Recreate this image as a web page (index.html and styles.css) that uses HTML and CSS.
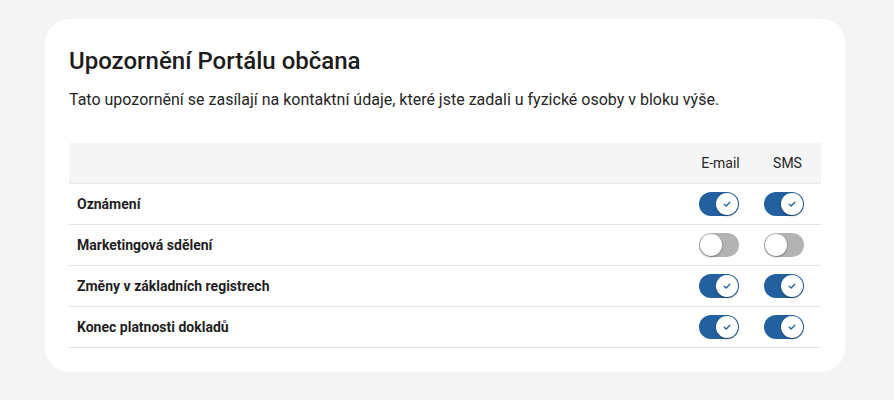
FILE: index.html
```html
<!DOCTYPE html>
<html lang="cs">
<head>
<meta charset="utf-8">
<link rel="stylesheet" href="styles.css">
</head>
<body>
<section class="card">
  <h1 class="title">Upozornění Portálu občana</h1>
  <p class="lead">Tato upozornění se zasílají na kontaktní údaje, které jste zadali u fyzické osoby v bloku výše.</p>
  <div class="table">
    <div class="row head">
      <div class="cell label"></div>
      <div class="cell col">E-mail</div>
      <div class="cell col">SMS</div>
    </div>
    <div class="row">
      <div class="cell label">Oznámení</div>
      <div class="cell col email"><span class="toggle on"><span class="knob"><svg viewBox="0 0 12 12"><path d="M3.2 6.2 5.2 8 8.8 4.2"/></svg></span></span></div>
      <div class="cell col sms"><span class="toggle on"><span class="knob"><svg viewBox="0 0 12 12"><path d="M3.2 6.2 5.2 8 8.8 4.2"/></svg></span></span></div>
    </div>
    <div class="row">
      <div class="cell label">Marketingová sdělení</div>
      <div class="cell col email"><span class="toggle"><span class="knob"></span></span></div>
      <div class="cell col sms"><span class="toggle"><span class="knob"></span></span></div>
    </div>
    <div class="row">
      <div class="cell label">Změny v základních registrech</div>
      <div class="cell col email"><span class="toggle on"><span class="knob"><svg viewBox="0 0 12 12"><path d="M3.2 6.2 5.2 8 8.8 4.2"/></svg></span></span></div>
      <div class="cell col sms"><span class="toggle on"><span class="knob"><svg viewBox="0 0 12 12"><path d="M3.2 6.2 5.2 8 8.8 4.2"/></svg></span></span></div>
    </div>
    <div class="row">
      <div class="cell label">Konec platnosti dokladů</div>
      <div class="cell col email"><span class="toggle on"><span class="knob"><svg viewBox="0 0 12 12"><path d="M3.2 6.2 5.2 8 8.8 4.2"/></svg></span></span></div>
      <div class="cell col sms"><span class="toggle on"><span class="knob"><svg viewBox="0 0 12 12"><path d="M3.2 6.2 5.2 8 8.8 4.2"/></svg></span></span></div>
    </div>
  </div>
</section>
</body>
</html>
```

FILE: styles.css
```css
html, body {
  margin: 0;
  padding: 0;
  background: #f4f4f4;
}
body {
  padding: 19px 49px 29px 45px;
  font-family: Roboto, "Liberation Sans", sans-serif;
  color: #262626;
}
.card {
  background: #ffffff;
  border-radius: 24px;
  padding: 27px 24px 24px 24px;
}
.title {
  margin: 0;
  font-size: 24px;
  line-height: 30px;
  font-weight: 500;
  color: #1c1c1c;
}
.lead {
  margin: 12px 0 0 0;
  font-size: 16px;
  line-height: 24px;
  color: #262626;
}
.table {
  margin-top: 31px;
}
.row {
  display: grid;
  grid-template-columns: 1fr 67px 67px;
  height: 40px;
  border-bottom: 1px solid #e4e4e4;
  align-items: center;
}
.row.head {
  background: #f5f5f5;
  border-bottom-color: #e8e8e8;
}
.cell {
  font-size: 14px;
}
.label {
  padding-left: 8px;
  font-weight: 700;
  color: #1f1f1f;
}
.col {
  display: flex;
  justify-content: center;
  font-size: 14px;
  color: #262626;
}
.col.email {
  padding-right: 3px;
}
.col.sms {
  padding-right: 7px;
}
.toggle {
  position: relative;
  display: block;
  width: 40px;
  height: 24px;
  border-radius: 12px;
  background: #b3b3b3;
}
.toggle.on {
  background: #22609f;
}
.knob {
  position: absolute;
  top: 1px;
  left: 1px;
  width: 22px;
  height: 22px;
  border-radius: 50%;
  background: #ffffff;
  box-shadow: 0 1px 2px rgba(0,0,0,0.35);
  display: flex;
  align-items: center;
  justify-content: center;
}
.toggle.on .knob {
  left: 17px;
}
.knob svg {
  width: 12px;
  height: 12px;
  fill: none;
  stroke: #22609f;
  stroke-width: 1.3;
  stroke-linecap: round;
  stroke-linejoin: round;
}
```
